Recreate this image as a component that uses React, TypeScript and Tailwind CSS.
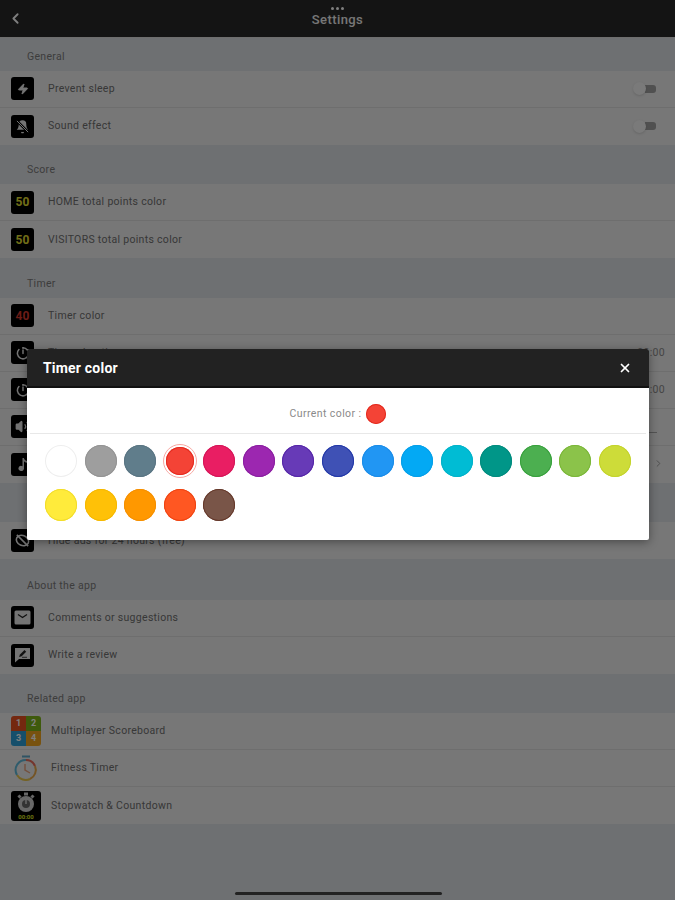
import { ChevronLeft, ChevronRight, Volume2, X, Zap } from "lucide-react";

const FONT = "font-['Roboto','Liberation_Sans',sans-serif]";

const swatches = [
  ["bg-[#ffffff]", "ring-[#eeeeee]"],
  ["bg-[#9e9e9e]", "ring-[#949494]"],
  ["bg-[#607d8b]", "ring-[#5a7583]"],
  ["bg-[#f44336]", "ring-[#e32b1f]"],
  ["bg-[#e91e63]", "ring-[#d41658]"],
  ["bg-[#9c27b0]", "ring-[#8a1fa0]"],
  ["bg-[#673ab7]", "ring-[#5526a8]"],
  ["bg-[#3f51b5]", "ring-[#2238a8]"],
  ["bg-[#2196f3]", "ring-[#1b8ce8]"],
  ["bg-[#03a9f4]", "ring-[#059fe8]"],
  ["bg-[#00bcd4]", "ring-[#02b2c9]"],
  ["bg-[#009688]", "ring-[#028b7e]"],
  ["bg-[#4caf50]", "ring-[#37a03c]"],
  ["bg-[#8bc34a]", "ring-[#7ab638]"],
  ["bg-[#cddc39]", "ring-[#c3d32c]"],
  ["bg-[#ffeb3b]", "ring-[#f2dc2a]"],
  ["bg-[#ffc107]", "ring-[#f5b800]"],
  ["bg-[#ff9800]", "ring-[#f58f00]"],
  ["bg-[#ff5722]", "ring-[#ee4412]"],
  ["bg-[#795548]", "ring-[#65382a]"],
];

function IconBox({ children }: { children: React.ReactNode }) {
  return (
    <div className="flex h-[23px] w-[23px] shrink-0 items-center justify-center overflow-hidden rounded-[3px] bg-black text-[#e8e8e8]">
      {children}
    </div>
  );
}

function Digits({ value, color }: { value: string; color: string }) {
  return <span className={`text-[12px] font-bold leading-none ${color}`}>{value}</span>;
}

function Row({
  icon,
  label,
  right,
  wide,
}: {
  icon: React.ReactNode;
  label: string;
  right?: React.ReactNode;
  wide?: boolean;
}) {
  return (
    <div className="flex h-[37px] items-center border-b border-[#dcdcdc] bg-[#eeeeee] pl-[11px] pr-[19px] last:border-b-0">
      {icon}
      <span className={`text-[10.5px] tracking-[0.3px] text-[#707070] ${wide ? "ml-[10px]" : "ml-[14px]"}`}>{label}</span>
      <div className="ml-auto flex items-center">{right}</div>
    </div>
  );
}

function Section({ title, tall, children }: { title: string; tall?: boolean; children: React.ReactNode }) {
  return (
    <>
      <div className={`flex items-end pb-[6px] pl-[27px] text-[10.5px] tracking-[0.3px] text-[#7a7a7a] ${tall ? "h-[40.5px]" : "h-[39.5px]"}`}>{title}</div>
      <div>{children}</div>
    </>
  );
}

function Toggle() {
  return (
    <div className="relative h-[8px] w-[11px] rounded-r-[3px] bg-[#a0a0a0]">
      <div className="absolute -left-[12px] -top-[2.5px] h-[13px] w-[13px] rounded-full bg-[#f4f4f4] shadow-sm" />
    </div>
  );
}

function BellSlash() {
  return (
    <svg width="15" height="15" viewBox="0 0 24 24">
      <path d="M6 8a6 6 0 0 1 12 0c0 7 3 9 3 9H3s3-2 3-9" fill="currentColor" />
      <path d="M10.3 21a2 2 0 0 0 3.4 0" stroke="currentColor" strokeWidth="2" fill="none" />
      <path d="M3 3l18 18" stroke="#000000" strokeWidth="4" />
      <path d="M3 3l18 18" stroke="currentColor" strokeWidth="1.6" />
    </svg>
  );
}

function TimerGlyph() {
  return (
    <svg width="14" height="14" viewBox="0 0 24 24" fill="none" stroke="currentColor" strokeWidth="2.6" strokeLinecap="round">
      <path d="M12 3a9.5 9.5 0 1 1-7 3" />
      <path d="M12 13V7" />
      <path d="M12 3v1" />
    </svg>
  );
}

function NoteGlyph() {
  return (
    <svg width="13" height="15" viewBox="0 0 13 15" fill="currentColor">
      <path d="M6.5 1h1.4c.3 1.700 1.500 2.500 3.100 3v1.800C9.500 5.500 8.600 5 8 4.300V11.500a2.800 2.500 0 1 1-1.500-2.200z" />
    </svg>
  );
}

function NoAdsGlyph() {
  return (
    <svg width="17" height="17" viewBox="0 0 24 24" fill="none" stroke="currentColor" strokeWidth="2.2">
      <ellipse cx="12" cy="12" rx="9" ry="7" transform="rotate(25 12 12)" />
      <path d="M4 4l16 16" />
    </svg>
  );
}

function MailGlyph() {
  return (
    <svg width="17" height="15" viewBox="0 0 17 15">
      <rect x="0.500" y="0.500" width="16" height="14" rx="1.500" fill="#e8e8e8" />
      <path d="M4 4.500l4.500 3 4.500-3" fill="none" stroke="#222222" strokeWidth="1.300" />
    </svg>
  );
}

function ReviewGlyph() {
  return (
    <svg width="17" height="16" viewBox="0 0 17 16">
      <path d="M1 1h15v11H5l-4 3.500z" fill="#e8e8e8" />
      <path d="M5 10l1-2.500 4.500-4.500 1.700 1.700-4.500 4.500z" fill="#222222" />
      <path d="M8 10.300h5" stroke="#222222" strokeWidth="0.800" />
    </svg>
  );
}

function ScoreboardIcon() {
  return (
    <div className="grid h-[30px] w-[30px] shrink-0 grid-cols-2 grid-rows-2 overflow-hidden rounded-[3px] text-center text-[9px] font-bold leading-[15px] text-white">
      <div className="bg-[#e8501f]">1</div>
      <div className="bg-[#7cb518]">2</div>
      <div className="bg-[#2d9fd6]">3</div>
      <div className="bg-[#f0a51e]">4</div>
    </div>
  );
}

function FitnessIcon() {
  return (
    <div className="flex h-[30px] w-[30px] shrink-0 items-center justify-center">
      <svg width="24" height="26" viewBox="0 0 24 26" fill="none" strokeWidth="2">
        <path d="M8 1.500h8" stroke="#5fa8c8" />
        <path d="M12 5a10 10 0 0 1 9 6" stroke="#e86a5a" />
        <path d="M21 11a10 10 0 0 1-5 13" stroke="#e8a84a" />
        <path d="M16 24a10 10 0 0 1-13-4" stroke="#e8c44a" />
        <path d="M3 20a10 10 0 0 1 9-15" stroke="#5fb8d8" />
        <path d="M11 9v6l5 3" stroke="#e8a07a" strokeWidth="1.400" />
      </svg>
    </div>
  );
}

function StopwatchIcon() {
  return (
    <div className="flex h-[30px] w-[30px] shrink-0 flex-col items-center justify-start overflow-hidden rounded-[3px] bg-black">
      <svg width="22" height="21" viewBox="0 0 22 21" fill="none" className="mt-[1px]">
        <rect x="9" y="0.500" width="4" height="3" fill="#cfcfcf" />
        <rect x="3" y="3" width="3" height="3" fill="#cfcfcf" transform="rotate(-40 4.500 4.500)" />
        <rect x="16" y="3" width="3" height="3" fill="#cfcfcf" transform="rotate(40 17.500 4.500)" />
        <circle cx="11" cy="12" r="8" fill="#d0d0d0" />
        <circle cx="11" cy="12" r="4" fill="#666666" />
        <path d="M11 12V8" stroke="#eeeeee" strokeWidth="1.200" />
      </svg>
      <span className="text-[6px] font-bold leading-[7px] text-[#d7e021]">00:00</span>
    </div>
  );
}

function TimeValue() {
  return <span className="-mr-[9px] text-[10.5px] tracking-[0.3px] text-[#8a8a8a]">00:00</span>;
}

export default function App() {
  return (
    <div className={`relative h-[900px] w-[675px] overflow-hidden bg-[#dde0e4] ${FONT}`}>
      <header className="relative flex h-[38px] items-center justify-center border-b border-[#dddddd] bg-[#282828]">
        <ChevronLeft className="absolute left-[7px] top-[10px] text-white" size={17} strokeWidth={2.6} />
        <div className="absolute left-[331px] top-[7px] flex gap-[2px]">
          <span className="h-[3px] w-[3px] rounded-full bg-white" />
          <span className="h-[3px] w-[3px] rounded-full bg-white" />
          <span className="h-[3px] w-[3px] rounded-full bg-white" />
        </div>
        <span className="pt-[2px] text-[13px] font-medium tracking-[0.4px] text-[#eeeeee]">Settings</span>
      </header>

      <div className="-mt-[7px]">
        <Section title="General">
          <Row icon={<IconBox><Zap size={12} fill="currentColor" /></IconBox>} label="Prevent sleep" right={<Toggle />} />
          <Row icon={<IconBox><BellSlash /></IconBox>} label="Sound effect" right={<Toggle />} />
        </Section>
        <Section title="Score">
          <Row icon={<IconBox><Digits value="50" color="text-[#e0de30]" /></IconBox>} label="HOME total points color" />
          <Row icon={<IconBox><Digits value="50" color="text-[#e0de30]" /></IconBox>} label="VISITORS total points color" />
        </Section>
        <Section title="Timer">
          <Row icon={<IconBox><Digits value="40" color="text-[#d8392e]" /></IconBox>} label="Timer color" />
          <Row icon={<IconBox><TimerGlyph /></IconBox>} label="Timer duration" right={<TimeValue />} />
          <Row icon={<IconBox><TimerGlyph /></IconBox>} label="Break duration" right={<TimeValue />} />
          <Row
            icon={<IconBox><Volume2 size={15} fill="currentColor" /></IconBox>}
            label="Volume"
            right={<div className="-mr-[1px] mt-[12px] h-px w-[200px] bg-[#a8a8a8]" />}
          />
          <Row icon={<IconBox><NoteGlyph /></IconBox>} label="Sound" right={<ChevronRight size={11} className="-mr-[8px] -mt-[2px] text-[#999999]" />} />
        </Section>
        <Section title="Ads">
          <Row icon={<IconBox><NoAdsGlyph /></IconBox>} label="Hide ads for 24 hours (free)" />
        </Section>
        <Section title="About the app" tall>
          <Row icon={<IconBox><MailGlyph /></IconBox>} label="Comments or suggestions" />
          <Row icon={<IconBox><ReviewGlyph /></IconBox>} label="Write a review" />
        </Section>
        <Section title="Related app">
          <Row wide icon={<ScoreboardIcon />} label="Multiplayer Scoreboard" />
          <Row wide icon={<FitnessIcon />} label="Fitness Timer" />
          <Row wide icon={<StopwatchIcon />} label="Stopwatch & Countdown" />
        </Section>
      </div>

      <div className="absolute inset-0 bg-black/50" />

      <div className="absolute bottom-[5px] left-[235px] h-[3px] w-[207px] rounded-full bg-[#222222]" />

      <div className="absolute left-[27px] top-[349px] w-[622px] overflow-hidden rounded-[2px] bg-white shadow-[0_2px_10px_rgba(0,0,0,0.4)]">
        <div className="flex h-[39px] items-center justify-between border-b-2 border-[#111111] bg-[#222222] pl-[16px] pr-[17px]">
          <span className="pt-[1px] text-[14px] font-bold tracking-[0.2px] text-white">Timer color</span>
          <X size={14} strokeWidth={3} className="text-white" />
        </div>
        <div className="mx-[3px] flex h-[46px] items-center justify-center gap-[5px] border-b border-[#e8e8e8] pt-[6px]">
          <span className="text-[10.5px] tracking-[0.4px] text-[#8a8a8a]">Current color :</span>
          <span className="h-[20px] w-[20px] rounded-full bg-[#f44336] ring-1 ring-inset ring-[#e32b1f]" />
        </div>
        <div className="flex flex-wrap gap-x-[7.57px] gap-y-[12px] pb-[19px] pl-[18px] pr-[10px] pt-[11px]">
          {swatches.map(([bg, ring], i) => (
            <div key={bg} className="relative h-[32px] w-[32px]">
              <div className={`rounded-full ring-1 ring-inset ${bg} ${ring} ${i === 3 ? "m-[2px] h-[28px] w-[28px]" : "h-full w-full"}`} />
              {i === 3 && <div className="absolute -inset-[1px] rounded-full border border-[#f7a8a2]" />}
            </div>
          ))}
        </div>
      </div>
    </div>
  );
}
